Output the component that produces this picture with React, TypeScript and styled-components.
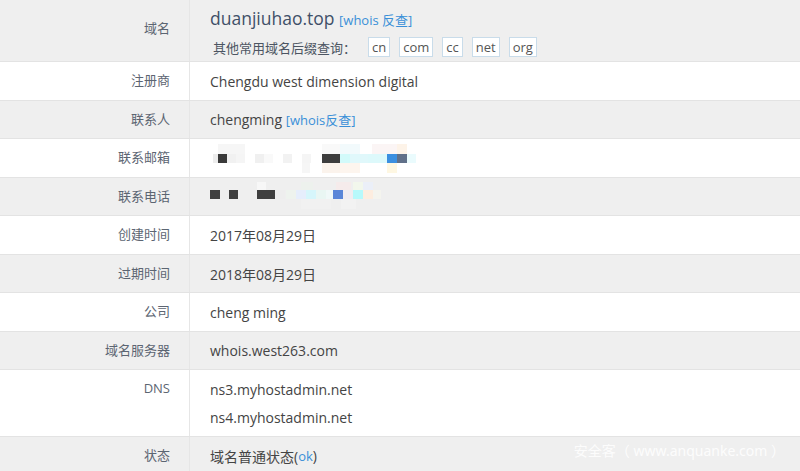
import React from 'react';
import styled, { createGlobalStyle } from 'styled-components';

type Cell = [number, number, number, number, string];

interface mosaic {
  cells: Cell[];
}

const emailCells: Cell[] = [
  [8, 0, 27, 10, '#f6f6f6'],
  [112, 0, 18, 10, '#f9f9f9'],
  [130, 0, 20, 10, '#f2fafc'],
  [162, 0, 25, 10, '#fbf5f5'],
  [187, 0, 10, 10, '#fdf3e8'],
  [3, 10, 5, 9, '#ececec'],
  [8, 10, 9, 9, '#3a3a3a'],
  [17, 10, 9, 9, '#f1f1f1'],
  [26, 10, 9, 9, '#f5f5f5'],
  [45, 10, 9, 9, '#f0f0f0'],
  [54, 10, 9, 9, '#f9f9f9'],
  [73, 10, 9, 9, '#f2f2f2'],
  [92, 10, 9, 9, '#f5f5f5'],
  [112, 10, 18, 9, '#3d3d3d'],
  [130, 10, 10, 9, '#d2fafa'],
  [140, 10, 18, 9, '#e0f8fb'],
  [158, 10, 19, 9, '#ddf9fb'],
  [177, 10, 10, 9, '#3b8fe0'],
  [187, 10, 10, 9, '#607089'],
  [197, 10, 9, 9, '#eafbfd'],
  [92, 19, 8, 10, '#f6f6f6'],
  [112, 19, 18, 10, '#fbf3ec'],
  [130, 19, 20, 10, '#fdf5ee'],
  [177, 19, 10, 10, '#fef7e2'],
];

const phoneCells: Cell[] = [
  [47, 0, 9, 8, '#f7f7f7'],
  [91, 0, 12, 8, '#edf1ed'],
  [126, 0, 15, 8, '#f5ebeb'],
  [143, 0, 10, 8, '#f2f7ec'],
  [153, 0, 10, 8, '#ebeff8'],
  [0, 8, 10, 9, '#3f3f3f'],
  [10, 8, 9, 9, '#eeeeee'],
  [19, 8, 9, 9, '#3f3f3f'],
  [47, 8, 18, 9, '#3f3f3f'],
  [65, 8, 10, 9, '#eeeeee'],
  [76, 8, 10, 9, '#eef3ee'],
  [86, 8, 10, 9, '#e6eefc'],
  [96, 8, 10, 9, '#d6f6fb'],
  [106, 8, 10, 9, '#e9f6f3'],
  [116, 8, 7, 9, '#f0f8f8'],
  [123, 8, 10, 9, '#5a86d8'],
  [133, 8, 10, 9, '#f1edf1'],
  [143, 8, 10, 9, '#b7f9fb'],
  [153, 8, 10, 9, '#fdeddf'],
  [163, 8, 8, 9, '#f4f4ee'],
  [66, 17, 10, 10, '#efefef'],
  [91, 17, 30, 10, '#f1f1f1'],
  [131, 17, 15, 10, '#f2f2f2'],
];

const Mosaic: React.FC<mosaic> = ({ cells }) => (
  <svg width="210" height="29" viewBox="0 0 210 29">
    {cells.map(([x, y, w, h, fill], i) => (
      <rect key={i} x={x} y={y} width={w} height={h} fill={fill} />
    ))}
  </svg>
);

const suffixes = ['cn', 'com', 'cc', 'net', 'org'];

const App: React.FC = () => {
  return (
    <Page>
      <GlobalStyle />
      <Table>
        <Row $shade>
          <Label $lh="57px">域名</Label>
          <DomainValue>
            <Title>
              duanjiuhao.top <Link>[whois 反查]</Link>
            </Title>
            <SuffixRow>
              <SuffixLabel>其他常用域名后缀查询：</SuffixLabel>
              {suffixes.map((s) => (
                <Suffix key={s}>{s}</Suffix>
              ))}
            </SuffixRow>
          </DomainValue>
        </Row>
        <Row $tall>
          <Label>注册商</Label>
          <Value>Chengdu west dimension digital</Value>
        </Row>
        <Row $shade>
          <Label>联系人</Label>
          <Value>
            chengming <Link>[whois反查]</Link>
          </Value>
        </Row>
        <Row $tall>
          <Label>联系邮箱</Label>
          <Value>
            <Mosaic cells={emailCells} />
          </Value>
        </Row>
        <Row $shade>
          <Label>联系电话</Label>
          <Value>
            <Mosaic cells={phoneCells} />
          </Value>
        </Row>
        <Row $tall>
          <Label>创建时间</Label>
          <Value>2017年08月29日</Value>
        </Row>
        <Row $shade>
          <Label>过期时间</Label>
          <Value>2018年08月29日</Value>
        </Row>
        <Row $tall>
          <Label>公司</Label>
          <Value>cheng ming</Value>
        </Row>
        <Row $shade>
          <Label>域名服务器</Label>
          <Value>whois.west263.com</Value>
        </Row>
        <Row>
          <Label>DNS</Label>
          <DnsValue>
            <div>ns3.myhostadmin.net</div>
            <div>ns4.myhostadmin.net</div>
          </DnsValue>
        </Row>
        <Row $shade>
          <Label>状态</Label>
          <Value>
            域名普通状态(<Link>ok</Link>)
          </Value>
        </Row>
      </Table>
      <Watermark>安全客（ www.anquanke.com ）</Watermark>
    </Page>
  );
};

const GlobalStyle = createGlobalStyle`
  body {
    margin: 0;
    background: #ffffff;
    font-family: "Open Sans", "Noto Sans CJK SC", sans-serif;
  }
  * {
    box-sizing: border-box;
  }
`;

const Page = styled.div`
  position: relative;
  width: 800px;
  height: 471px;
  overflow: hidden;
  background: #efefef;
`;

const Table = styled.div`
  display: flex;
  flex-direction: column;
`;

const Row = styled.div<{ $shade?: boolean; $tall?: boolean }>`
  display: grid;
  grid-template-columns: 190px 1fr;
  background: ${(props) => (props.$shade ? '#efefef' : '#ffffff')};
  border-bottom: 1px solid #e3e3e3;
  min-height: ${(props) => (props.$tall ? '39px' : '38px')};
`;

const Label = styled.div<{ $lh?: string }>`
  border-right: 1px solid #e6e6e6;
  text-align: right;
  padding-right: 19px;
  font-size: 13px;
  line-height: ${(props) => props.$lh || '37px'};
  color: #5c6572;
`;

const Value = styled.div`
  display: flex;
  align-items: center;
  padding-left: 20px;
  font-size: 14px;
  color: #444444;
  white-space: pre;
`;

const DomainValue = styled.div`
  padding: 5px 0 0 20px;
`;

const Title = styled.div`
  font-size: 17.5px;
  line-height: 26px;
  color: #3f5068;
`;

const Link = styled.span`
  font-size: 13px;
  color: #3a8fd8;
`;

const SuffixRow = styled.div`
  display: flex;
  align-items: center;
  gap: 9px;
  height: 28px;
  padding-left: 3px;
  font-size: 13px;
  color: #4c5562;
`;

const SuffixLabel = styled.span`
  margin-right: 3px;
`;

const Suffix = styled.div`
  border: 1px solid #c9dcea;
  background: #ffffff;
  padding: 0 3px;
  height: 20px;
  line-height: 18px;
  font-size: 13px;
  color: #555555;
`;

const DnsValue = styled.div`
  padding: 6px 0 4px 20px;
  font-size: 14px;
  line-height: 28px;
  color: #444444;
`;

const Watermark = styled.div`
  position: absolute;
  right: 15px;
  bottom: 11px;
  font-size: 14px;
  color: rgba(255, 255, 255, 0.85);
  font-family: "Noto Sans", "Noto Sans CJK SC", sans-serif;
`;

export default App;
